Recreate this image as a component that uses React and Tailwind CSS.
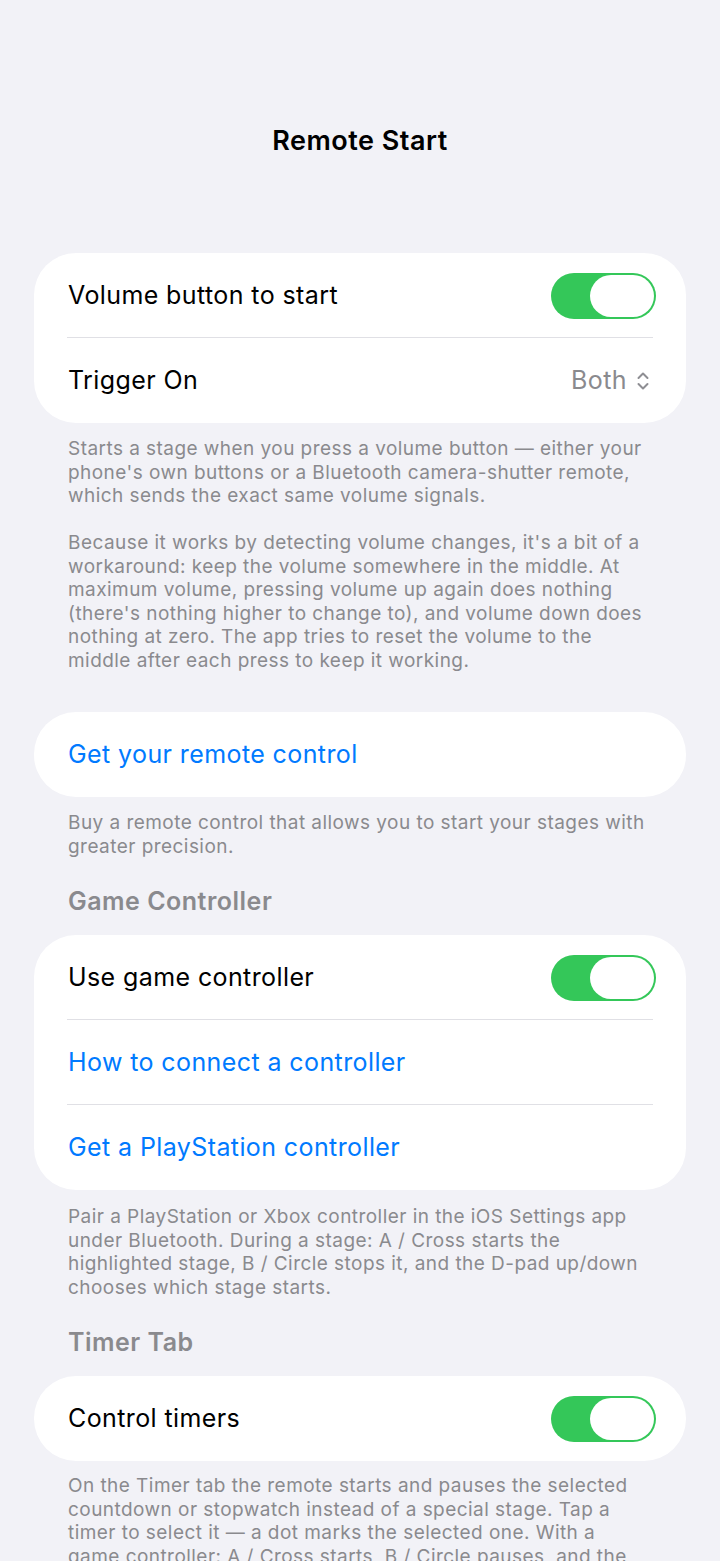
import React from 'react'

const FONT = { fontFamily: 'Inter, "Noto Sans", sans-serif' }

function Toggle() {
  return (
    <div className="w-[105px] h-[46px] rounded-full bg-[#34c759] p-[2px] flex justify-end">
      <div className="w-[64px] h-[42px] rounded-full bg-white" />
    </div>
  )
}

function UpDown() {
  return (
    <svg width="14" height="22" viewBox="0 0 14 22" fill="none" stroke="#8e8e93" strokeWidth="2" strokeLinecap="round" strokeLinejoin="round">
      <path d="M2.5 8l4.5-4.5 4.5 4.5" />
      <path d="M2.5 14l4.5 4.5 4.5-4.5" />
    </svg>
  )
}

function Row({ children, right, last }) {
  return (
    <div className="relative h-[85px] flex items-center justify-between pl-[34px] pr-[30px]">
      {children}
      {right}
      {!last && <div className="absolute left-[33px] right-[33px] bottom-0 h-px bg-[#e0e0e5]" />}
    </div>
  )
}

function Card({ children }) {
  return <div className="mx-[34px] bg-white rounded-[42px] overflow-hidden">{children}</div>
}

function Footer({ children, className = '' }) {
  return (
    <div className={`px-[68px] text-[19px] leading-[23.5px] text-[#8a8a8e] tracking-[0.45px] ${className}`}>
      {children}
    </div>
  )
}

function Header({ children }) {
  return (
    <div className="px-[68px] mt-[28px] mb-[19px] text-[25px] leading-[30px] font-semibold text-[#8a8a8e] tracking-[0.5px]">
      {children}
    </div>
  )
}

const label = 'text-[25px] text-black tracking-[0.4px]'
const link = 'text-[25px] text-[#007aff] tracking-[0.4px]'

export default function App() {
  return (
    <div className="min-h-[1561px] bg-[#f2f2f7] overflow-hidden" style={FONT}>
      <div className="pt-[125px] h-[253px] text-center text-[27px] leading-[32px] font-semibold text-black tracking-[0.5px]">
        Remote Start
      </div>

      <Card>
        <Row right={<Toggle />}>
          <span className={label}>Volume button to start</span>
        </Row>
        <Row last right={
          <span className="flex items-center gap-[9px] pr-[6px] text-[25px] text-[#8a8a8e] tracking-[0.4px]">
            Both <UpDown />
          </span>
        }>
          <span className={label}>Trigger On</span>
        </Row>
      </Card>
      <Footer className="mt-[14px]">
        <p>Starts a stage when you press a volume button — either your phone's own buttons or a Bluetooth camera-shutter remote, which sends the exact same volume signals.</p>
        <p className="mt-[23.5px]">Because it works by detecting volume changes, it's a bit of a workaround: keep the volume somewhere in the middle. At maximum volume, pressing volume up again does nothing (there's nothing higher to change to), and volume down does nothing at zero. The app tries to reset the volume to the middle after each press to keep it working.</p>
      </Footer>

      <div className="mt-[40px]">
        <Card>
          <Row last>
            <span className={link}>Get your remote control</span>
          </Row>
        </Card>
      </div>
      <Footer className="mt-[14px]">
        <p>Buy a remote control that allows you to start your stages with greater precision.</p>
      </Footer>

      <Header>Game Controller</Header>
      <Card>
        <Row right={<Toggle />}>
          <span className={label}>Use game controller</span>
        </Row>
        <Row>
          <span className={link}>How to connect a controller</span>
        </Row>
        <Row last>
          <span className={link}>Get a PlayStation controller</span>
        </Row>
      </Card>
      <Footer className="mt-[15px]">
        <p>Pair a PlayStation or Xbox controller in the iOS Settings app under Bluetooth. During a stage: A / Cross starts the highlighted stage, B / Circle stops it, and the D-pad up/down chooses which stage starts.</p>
      </Footer>

      <Header>Timer Tab</Header>
      <Card>
        <Row last right={<Toggle />}>
          <span className={label}>Control timers</span>
        </Row>
      </Card>
      <Footer className="mt-[13px]">
        <p>On the Timer tab the remote starts and pauses the selected countdown or stopwatch instead of a special stage. Tap a timer to select it — a dot marks the selected one. With a game controller: A / Cross starts, B / Circle pauses, and the D-pad up/down chooses which timer is selected.</p>
      </Footer>
    </div>
  )
}
